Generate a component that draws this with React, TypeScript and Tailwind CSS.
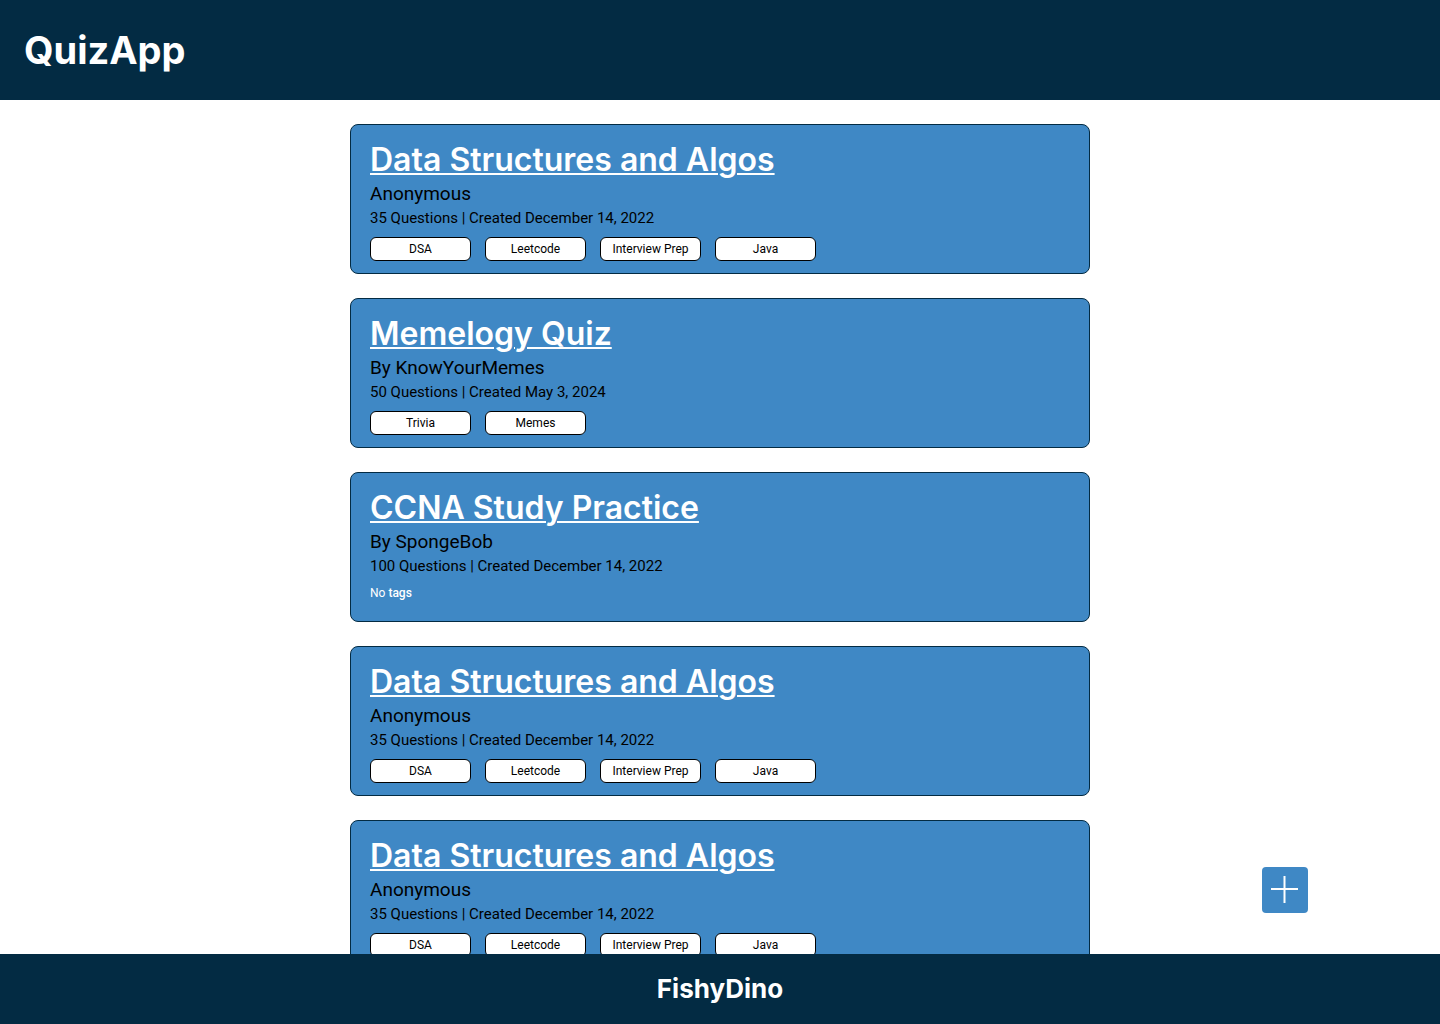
type Quiz = {
  title: string;
  author: string;
  details: string;
  tags: string[];
};

const dataStructures: Quiz = {
  title: "Data Structures and Algos",
  author: "Anonymous",
  details: "35 Questions | Created December 14, 2022",
  tags: ["DSA", "Leetcode", "Interview Prep", "Java"],
};

const quizzes: Quiz[] = [
  dataStructures,
  {
    title: "Memelogy Quiz",
    author: "By KnowYourMemes",
    details: "50 Questions | Created May 3, 2024",
    tags: ["Trivia", "Memes"],
  },
  {
    title: "CCNA Study Practice",
    author: "By SpongeBob",
    details: "100 Questions | Created December 14, 2022",
    tags: [],
  },
  dataStructures,
  dataStructures,
];

function QuizCard({ quiz }: { quiz: Quiz }) {
  return (
    <li className="rounded-lg border border-[#032b43] bg-[#3f88c5] px-[19px] pt-[17px] pb-3 text-black">
      <h2 className="font-['Inter',sans-serif] text-[32px] leading-9 font-semibold text-white">
        <a href="#quiz" className="underline decoration-2 underline-offset-2">
          {quiz.title}
        </a>
      </h2>
      <p className="mt-1 text-[19px] leading-6">{quiz.author}</p>
      <p className="text-[15px] leading-6">{quiz.details}</p>
      {quiz.tags.length > 0 ? (
        <ul className="mt-[7px] flex flex-wrap gap-[14px]">
          {quiz.tags.map((tag) => (
            <li
              key={tag}
              className="flex h-6 w-[101px] items-center justify-center rounded-md border border-black bg-white text-xs"
            >
              {tag}
            </li>
          ))}
        </ul>
      ) : (
        <p className="mt-[7px] h-6 text-xs leading-4 text-white">
          No <span className="font-medium">tags</span>
        </p>
      )}
    </li>
  );
}

export default function App() {
  return (
    <div className="flex h-screen flex-col bg-white font-['Roboto',sans-serif]">
      <header className="flex shrink-0 items-center bg-[#032b43] px-6 py-[26px]">
        <h1 className="font-['Inter',sans-serif] text-[38px] leading-12 font-bold text-white">QuizApp</h1>
      </header>
      <main className="min-h-0 flex-1 overflow-hidden px-6 pt-6">
        <ul className="mx-auto flex max-w-[740px] flex-col gap-6">
          {quizzes.map((quiz, index) => (
            <QuizCard key={index} quiz={quiz} />
          ))}
        </ul>
      </main>
      <footer className="flex shrink-0 items-center justify-center bg-[#032b43] py-[19px]">
        <p className="font-['Inter',sans-serif] text-[26px] leading-8 font-bold text-white">FishyDino</p>
      </footer>
      <button
        type="button"
        aria-label="Add quiz"
        className="fixed right-[132px] bottom-[111px] flex size-[46px] items-center justify-center rounded bg-[#3f88c5] text-white"
      >
        <svg viewBox="0 0 28 28" className="size-7" fill="none" stroke="currentColor" strokeWidth="2" aria-hidden="true">
          <path d="M0 13H27M13.5 0V27" />
        </svg>
      </button>
    </div>
  );
}
